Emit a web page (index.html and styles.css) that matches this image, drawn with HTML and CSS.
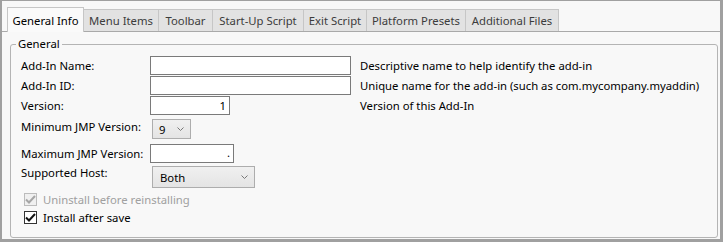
FILE: index.html
```html
<!DOCTYPE html>
<html>
<head>
<meta charset="utf-8">
<link rel="stylesheet" href="styles.css">
</head>
<body>
<div class="frame">
  <div class="tabs">
    <div class="tab active t1">General Info</div>
    <div class="tab t2">Menu Items</div>
    <div class="tab t3">Toolbar</div>
    <div class="tab t4">Start-Up Script</div>
    <div class="tab t5">Exit Script</div>
    <div class="tab t6">Platform Presets</div>
    <div class="tab t7">Additional Files</div>
  </div>
  <div class="panel">
    <div class="group">
      <div class="legend">General</div>
      <div class="row r1">
        <div class="label">Add-In Name:</div>
        <div class="field"><div class="input wide"></div></div>
        <div class="desc">Descriptive name to help identify the add-in</div>
      </div>
      <div class="row r2">
        <div class="label">Add-In ID:</div>
        <div class="field"><div class="input wide"></div></div>
        <div class="desc">Unique name for the add-in (such as com.mycompany.myaddin)</div>
      </div>
      <div class="row r3">
        <div class="label">Version:</div>
        <div class="field"><div class="input ver">1</div></div>
        <div class="desc">Version of this Add-In</div>
      </div>
      <div class="row r4 top">
        <div class="label">Minimum JMP Version:</div>
        <div class="select small"><span>9</span><svg class="chev" width="7" height="4" viewBox="0 0 7 4"><path d="M0.5 0.5 L3.5 3.5 L6.5 0.5" fill="none" stroke="#777" stroke-width="1"/></svg></div>
      </div>
      <div class="row r5">
        <div class="label">Maximum JMP Version:</div>
        <div class="input max">.</div>
      </div>
      <div class="row r6 top">
        <div class="label">Supported Host:</div>
        <div class="select host"><span>Both</span><svg class="chev" width="7" height="4" viewBox="0 0 7 4"><path d="M0.5 0.5 L3.5 3.5 L6.5 0.5" fill="none" stroke="#777" stroke-width="1"/></svg></div>
      </div>
      <div class="check disabled">
        <span class="box"><svg width="11" height="9" viewBox="0 0 11 9"><path d="M1 4.5 L4 7.5 L10 1" fill="none" stroke="#a6a6a6" stroke-width="2"/></svg></span>
        <span>Uninstall before reinstalling</span>
      </div>
      <div class="check c2">
        <span class="box"><svg width="11" height="9" viewBox="0 0 11 9"><path d="M1 4.5 L4 7.5 L10 1" fill="none" stroke="#111" stroke-width="2"/></svg></span>
        <span>Install after save</span>
      </div>
    </div>
  </div>
</div>
</body>
</html>
```

FILE: styles.css
```css
* { box-sizing: border-box; }
html, body { margin: 0; padding: 0; }
body {
  width: 723px;
  height: 242px;
  font-family: "Noto Sans", "Open Sans", sans-serif;
  font-size: 11.3px;
  color: #000;
  background: #a0a0a0;
  overflow: hidden;
}
.frame {
  width: 723px;
  height: 242px;
  border-top: 1px solid #a0a0a0;
  border-left: 2px solid #a0a0a0;
  border-right: 3px solid #a0a0a0;
  border-bottom: 3px solid #a0a0a0;
  background: #f8f8f8;
  display: flex;
  flex-direction: column;
}
.tabs {
  display: flex;
  align-items: flex-end;
  padding-left: 5px;
  padding-top: 6px;
  height: 31px;
  border-bottom: 1px solid #a9a9a9;
}
.tab {
  height: 22px;
  line-height: 21px;
  text-align: center;
  background: #e2e2e2;
  border: 1px solid #c6c6c6;
  border-bottom: none;
  border-left: none;
  color: #3c3c3c;
  white-space: nowrap;
}
.tab.active {
  height: 25px;
  line-height: 25px;
  background: #fafafa;
  border: 1px solid #c6c6c6;
  border-bottom: none;
  color: #000;
  margin-bottom: -1px;
}
.t1 { width: 77px; }
.t2 { width: 75px; }
.t3 { width: 54px; }
.t4 { width: 91px; }
.t5 { width: 63px; }
.t6 { width: 99px; }
.t7 { width: 93px; }
.panel {
  flex: 1;
  padding: 12px 2px 2px 8px;
}
.group {
  position: relative;
  height: 194px;
  border: 1px solid #b4b4b4;
  border-radius: 3px;
  padding: 10px 0 0 10px;
}
.legend {
  position: absolute;
  top: -10px;
  left: 5px;
  padding: 0 2px;
  background: #f8f8f8;
  line-height: 18px;
}
.row {
  display: flex;
  align-items: center;
  height: 20px;
}
.row.top { align-items: flex-start; }
.label {
  width: 129px;
  flex: none;
  white-space: nowrap;
}
.row.top .label { line-height: 16px; }
.field { width: 210px; flex: none; }
.input {
  height: 19px;
  border: 1px solid #7a7a7a;
  background: #fff;
  text-align: right;
  padding-right: 3px;
  line-height: 17px;
}
.wide { width: 201px; }
.ver { width: 80px; }
.max { width: 84px; line-height: 15px; }
.desc {
  white-space: nowrap;
}
.r4 { margin-top: 4px; height: 22px; }
.r5 { margin-top: 2px; }
.r6 { margin-top: 2px; height: 24px; }
.select {
  margin-left: 2px;
  border: 1px solid #adadad;
  background: linear-gradient(#f0f0f0, #e4e4e4);
  display: flex;
  align-items: center;
  justify-content: space-between;
  padding: 0 6px 0 6px;
}
.select.small { width: 39px; height: 20px; }
.select.host { width: 103px; height: 22px; padding-left: 7px; margin-top: 1px; }
.chev { display: block; }
.check {
  display: flex;
  align-items: center;
  gap: 6px;
  padding-left: 3px;
  height: 18px;
}
.check.disabled { margin-top: 1px; color: #a0a0a0; }
.check.c2 { margin-top: 0px; }
.box {
  width: 13px;
  height: 13px;
  border: 1px solid #333;
  background: #fff;
  display: flex;
  align-items: center;
  justify-content: center;
}
.disabled .box { border-color: #bcbcbc; background: #f0f0f0; }
```
